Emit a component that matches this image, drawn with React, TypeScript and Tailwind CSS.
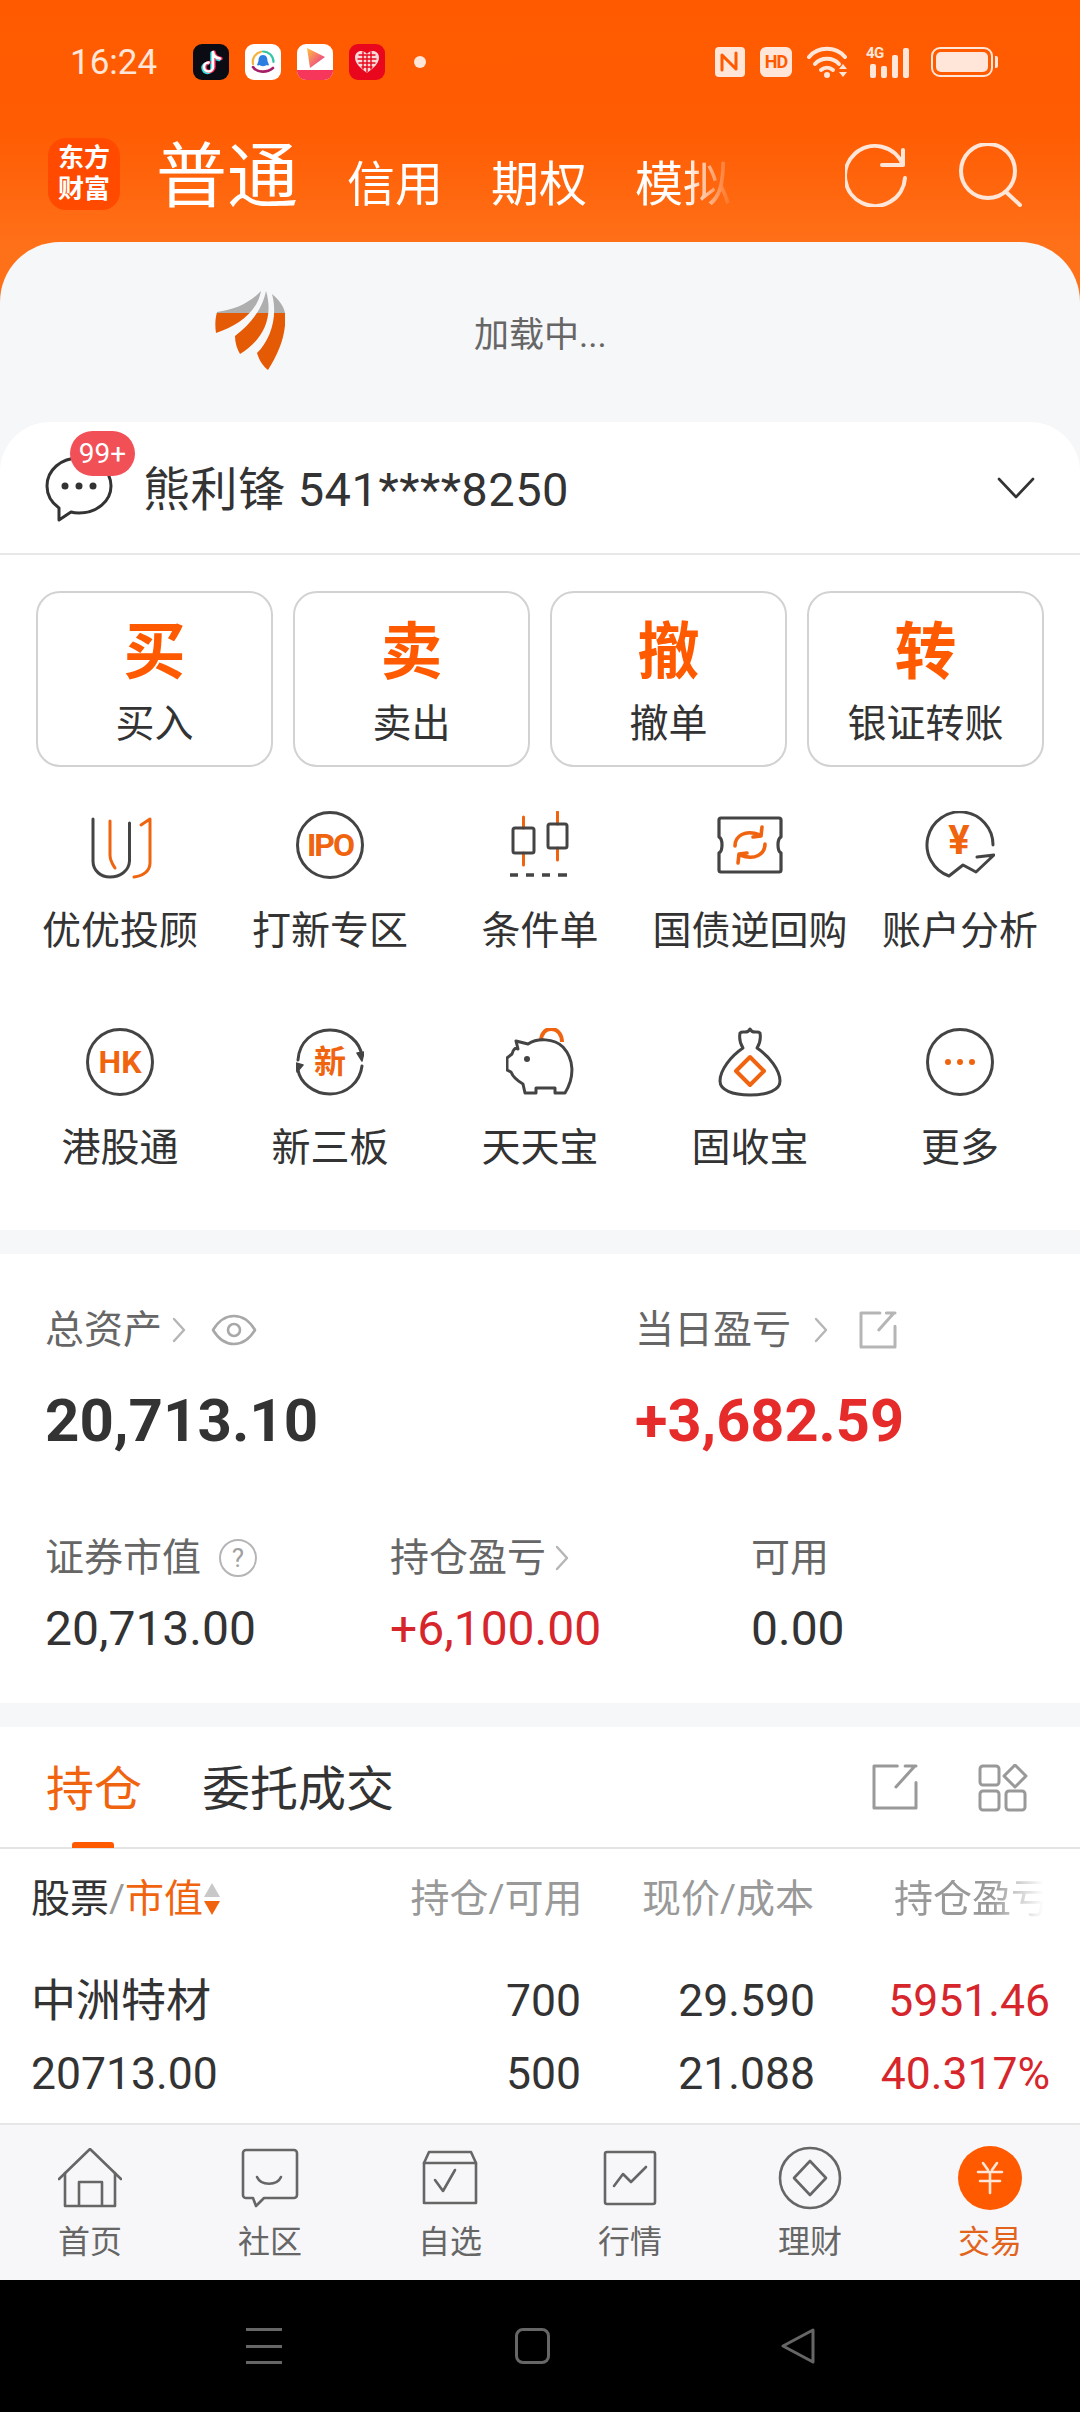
import React from 'react';

const ACCENT = '#ff5a00';
const INK = '#444444';
const PALE = '#ffe6d8';

const Svg = ({ w, h, children, className = '' }: { w: number; h: number; children: React.ReactNode; className?: string }) => (
  <svg width={w} height={h} viewBox={`0 0 ${w} ${h}`} fill="none" strokeLinecap="round" strokeLinejoin="round" className={`shrink-0 ${className}`}>
    {children}
  </svg>
);

/* status bar ---------------------------------------------------------- */

const AppIcons = () => (
  <div className="flex items-center gap-[16px] ml-[36px]">
    <div className="w-[36px] h-[36px] rounded-[9px] bg-[#0b0b14] flex items-center justify-center">
      <Svg w={24} h={26}>
        <path d="M14 3v15a4.5 4.5 0 1 1-4.5-4.5M14 3c.5 4 3 6 7 6.5" stroke="#35dfe6" strokeWidth="3.4" transform="translate(-1 1)" />
        <path d="M14 3v15a4.5 4.5 0 1 1-4.5-4.5M14 3c.5 4 3 6 7 6.5" stroke="#fb2c5a" strokeWidth="3.4" transform="translate(1 0)" />
        <path d="M14 3v15a4.5 4.5 0 1 1-4.5-4.5M14 3c.5 4 3 6 7 6.5" stroke="#ffffff" strokeWidth="2.6" />
      </Svg>
    </div>
    <div className="w-[36px] h-[36px] rounded-[9px] bg-white flex items-center justify-center">
      <Svg w={30} h={30}>
        <path d="M5 17A10.5 10.5 0 0 1 13 4.7" stroke="#f3b33d" strokeWidth="2.2" />
        <path d="M15 4.500A10.500 10.500 0 0 1 25.500 15" stroke="#37c6a6" strokeWidth="2.2" />
        <path d="M5 20c4 6 14 6 20 1" stroke="#a51f66" strokeWidth="2.6" />
        <path d="M15 8c3.500 0 4.500 3 4.500 6l1.500 4c-1 1-2 0-2.500 0-1 1.500-6 1.500-7 0-.5 0-1.500 1-2.500 0l1.500-4c0-3 1-6 4.500-6z" fill="#2c7fe0" />
      </Svg>
    </div>
    <div className="w-[36px] h-[36px] rounded-[9px] bg-white overflow-hidden flex flex-col items-center">
      <Svg w={36} h={26}>
        <defs>
          <linearGradient id="playFill" x1="0" y1="0" x2="1" y2="1">
            <stop offset="0" stopColor="#ffc23c" />
            <stop offset="1" stopColor="#e8239a" />
          </linearGradient>
        </defs>
        <path d="M10 4l18 9-15 11z" fill="url(#playFill)" />
      </Svg>
      <div className="w-full h-[10px] bg-[#f6365a]" />
    </div>
    <div className="w-[36px] h-[36px] rounded-[9px] bg-[#e8071c] flex items-center justify-center">
      <Svg w={26} h={24}>
        <path d="M13 23C6 18 1 13 1 7.500 1 3.500 4 1 7 1c2.500 0 4.500 1 6 3 1.500-2 3.500-3 6-3 3 0 6 2.500 6 6.500 0 5.500-5 10.500-12 15.500z" fill="#fbd9d9" />
        <path d="M5 5h16M4 9h18M5 13h16M8 17h10M9 2v17M13 5v17M17 2v17" stroke="#e8071c" strokeWidth="1.400" />
      </Svg>
    </div>
    <div className="w-[12px] h-[12px] rounded-full bg-[#ffe6d8] ml-[13px]" />
  </div>
);

const StatusRight = () => (
  <div className="flex items-center gap-[15px]">
    <div className="w-[30px] h-[30px] rounded-[4px] bg-[#ffe6d8] flex items-center justify-center">
      <Svg w={22} h={24}>
        <path d="M3 5v15M3 5l14 14M17 3v16" stroke={ACCENT} strokeWidth="3" />
      </Svg>
    </div>
    <div className="w-[32px] h-[30px] rounded-[6px] bg-[#ffe6d8] flex items-center justify-center text-[18px] leading-none font-bold text-[#ff5a00] tracking-[-1px]">HD</div>
    <Svg w={44} h={34}>
      <path d="M2 12C11 1 29 1 38 12" stroke={PALE} strokeWidth="4" />
      <path d="M8 19c6-7 18-7 24 0" stroke={PALE} strokeWidth="4" />
      <path d="M14 25c3.500-3 8.500-3 12 0" stroke={PALE} strokeWidth="4" />
      <circle cx="20" cy="30" r="3" fill={PALE} />
      <path d="M32 24l4-5 4 5zM32 27l4 5 4-5z" fill={PALE} />
    </Svg>
    <div className="relative w-[48px] h-[32px] flex items-end gap-[5px] pl-[4px]">
      <span className="absolute left-0 top-0 text-[15px] leading-none font-bold text-[#ffe6d8] tracking-[-0.5px]">4G</span>
      <div className="w-[6px] h-[14px] rounded-[2px] bg-[#ffe6d8]" />
      <div className="w-[6px] h-[12px] rounded-[2px] bg-[#ffe6d8]" />
      <div className="w-[6px] h-[23px] rounded-[2px] bg-[#ffe6d8]" />
      <div className="w-[6px] h-[30px] rounded-[2px] bg-[#ffe6d8]" />
    </div>
    <div className="flex items-center gap-[2px] ml-[2px]">
      <div className="w-[62px] h-[30px] rounded-[9px] border-[2px] border-[#ffe6d8] p-[3px]">
        <div className="w-full h-full rounded-[5px] bg-[#ffe6d8]" />
      </div>
      <div className="w-[3px] h-[12px] rounded-r-[2px] bg-[#ffe6d8]" />
    </div>
  </div>
);

/* loading placeholder logo ------------------------------------------- */

const WingLogo = () => (
  <Svg w={70} h={80}>
    <defs>
      <linearGradient id="wingFill" gradientUnits="userSpaceOnUse" x1="0" y1="0" x2="0" y2="80">
        <stop offset="0.27" stopColor="#aeaeae" />
        <stop offset="0.27" stopColor="#e55a05" />
      </linearGradient>
    </defs>
    <path d="M46 0C36 11 20 19 2 21 0 28 0 36 1 42 22 35 42 22 46 0z" fill="url(#wingFill)" />
    <path d="M51 0C47 20 34 34 20 45 20 52 22 58 25 63 44 52 60 30 51 0z" fill="url(#wingFill)" />
    <path d="M57 3C63 25 56 48 42 62 44 69 48 75 53 79 64 62 72 42 70 22 69 15 63 8 57 3z" fill="url(#wingFill)" />
  </Svg>
);

/* shortcut grid ------------------------------------------------------- */

const ORANGE = '#f0640f';

const Ring = ({ children }: { children?: React.ReactNode }) => (
  <div className="w-[68px] h-[68px] rounded-full border-[3px] border-[#444444] flex items-center justify-center">{children}</div>
);

const shortcuts: { label: string; icon: React.ReactNode }[] = [
  {
    label: '优优投顾',
    icon: (
      <Svg w={68} h={68}>
        <path d="M7 8v42c0 10 8 16 17 16 10 0 19-6 19.500-16V12" stroke={INK} strokeWidth="3" />
        <path d="M24 10v34c0 6 3 10 5 13" stroke={ORANGE} strokeWidth="3" />
        <path d="M55 14l9-6v44c0 8-7 13-16 14" stroke={ORANGE} strokeWidth="3" />
      </Svg>
    ),
  },
  {
    label: '打新专区',
    icon: <Ring><span className="text-[32px] leading-none font-bold text-[#f0640f] tracking-[-2px]">IPO</span></Ring>,
  },
  {
    label: '条件单',
    icon: (
      <Svg w={68} h={68}>
        <path d="M17.500 6v11M17.500 42v12M51.500 1v12M51.500 37v12" stroke={ORANGE} strokeWidth="3" />
        <rect x="7" y="17" width="21" height="25" rx="2" stroke={INK} strokeWidth="3" />
        <rect x="42" y="13" width="19" height="24" rx="2" stroke={INK} strokeWidth="3" />
        <path d="M4 64h8M20 64h8M36 64h8M52 64h9" stroke={INK} strokeWidth="3.500" strokeLinecap="butt" />
      </Svg>
    ),
  },
  {
    label: '国债逆回购',
    icon: (
      <Svg w={68} h={68}>
        <path d="M5 7h58a2 2 0 0 1 2 2v17c-4 2-4 14 0 16v17a2 2 0 0 1-2 2H5a2 2 0 0 1-2-2V42c4-2 4-14 0-16V9a2 2 0 0 1 2-2z" stroke={INK} strokeWidth="3.200" />
        <path d="M19 35c0-10 10-17 25-11M49 33c0 10-10 17-25 11" stroke={ORANGE} strokeWidth="3.600" />
        <path d="M46 16l-1 9-8 1M22 52l1-9 8-1" stroke={ORANGE} strokeWidth="3.600" />
      </Svg>
    ),
  },
  {
    label: '账户分析',
    icon: (
      <div className="relative w-[70px] h-[68px] flex items-center justify-center">
        <Svg w={70} h={68} className="absolute left-0 top-0">
          <path d="M68 34A33 33 0 1 0 24 65L38 54l13 7 18-17-17 2" stroke={INK} strokeWidth="3" />
        </Svg>
        <span className="text-[40px] leading-none font-bold text-[#f0640f] mb-[8px] mr-[2px]">¥</span>
      </div>
    ),
  },
  {
    label: '港股通',
    icon: <Ring><span className="text-[32px] leading-none font-bold text-[#f0640f]">HK</span></Ring>,
  },
  {
    label: '新三板',
    icon: (
      <div className="relative w-[68px] h-[68px] flex items-center justify-center">
        <Svg w={68} h={68} className="absolute left-0 top-0">
          <path d="M2 32C3 14 17 2 34 2c17 0 30 12 32 26" stroke={INK} strokeWidth="3" />
          <path d="M66 38C64 54 51 66 34 66 17 66 4 54 2 42" stroke={INK} strokeWidth="3" />
          <path d="M61 25l5 8 2-9zM1 44l-1-9 7 2z" fill={INK} stroke={INK} strokeWidth="1.500" />
        </Svg>
        <span className="text-[32px] leading-none font-bold text-[#f0640f]">新</span>
      </div>
    ),
  },
  {
    label: '天天宝',
    icon: (
      <Svg w={68} h={68}>
        <path d="M35 13c0-8 5-12 10-12 7 0 11 6 11 13" stroke={ORANGE} strokeWidth="4" strokeLinecap="butt" />
        <path d="M10 13l12 3c9-6 26-6 35 3 11 12 12 30 2 46H49v-5H30v5H19l-2-9C10 52 7 49 5 44l-4-2V30l5-4c1-4 3-7 6-5z" stroke={INK} strokeWidth="3" />
        <circle cx="21" cy="31" r="3" fill={INK} />
      </Svg>
    ),
  },
  {
    label: '固收宝',
    icon: (
      <Svg w={68} h={70}>
        <path d="M24 6c3-3 7 2 10-4 3 6 7 1 10 4 1 6-1 12-3 15 12 8 23 22 23 33 0 9-12 14-30 14S4 63 4 54c0-11 11-25 23-33-2-3-4-9-3-15z" stroke={INK} strokeWidth="3" />
        <path d="M34 30l14 14-14 14-14-14z" stroke={ORANGE} strokeWidth="4" />
      </Svg>
    ),
  },
  {
    label: '更多',
    icon: (
      <Ring>
        <div className="flex gap-[6px]">
          <div className="w-[6px] h-[6px] rounded-full bg-[#f0640f]" />
          <div className="w-[6px] h-[6px] rounded-full bg-[#f0640f]" />
          <div className="w-[6px] h-[6px] rounded-full bg-[#f0640f]" />
        </div>
      </Ring>
    ),
  },
];

/* bottom navigation --------------------------------------------------- */

const NAV = '#666666';

const tabs: { label: string; icon: React.ReactNode }[] = [
  {
    label: '首页',
    icon: (
      <Svg w={64} h={60}>
        <path d="M1 31L32 1l31 30" stroke={NAV} strokeWidth="2.600" />
        <path d="M7 25v33h50V25M21 58V34h23v24" stroke={NAV} strokeWidth="2.600" />
      </Svg>
    ),
  },
  {
    label: '社区',
    icon: (
      <Svg w={58} h={60}>
        <path d="M5 2h48a3 3 0 0 1 3 3v42a3 3 0 0 1-3 3H23l-8 8-3-8H5a3 3 0 0 1-3-3V5a3 3 0 0 1 3-3z" stroke={NAV} strokeWidth="2.600" />
        <path d="M16 29c4 9 20 9 24 0" stroke={NAV} strokeWidth="2.600" />
      </Svg>
    ),
  },
  {
    label: '自选',
    icon: (
      <Svg w={56} h={56}>
        <path d="M2 13L7 2h42l5 11v40H2z" stroke={NAV} strokeWidth="2.600" />
        <path d="M2 13h52M13 30l8 11 12-21" stroke={NAV} strokeWidth="2.600" />
      </Svg>
    ),
  },
  {
    label: '行情',
    icon: (
      <Svg w={54} h={56}>
        <rect x="2" y="2" width="50" height="52" rx="2" stroke={NAV} strokeWidth="2.600" />
        <path d="M11 36l9-12 8 8 15-15" stroke={NAV} strokeWidth="2.600" />
      </Svg>
    ),
  },
  {
    label: '理财',
    icon: (
      <Svg w={64} h={64}>
        <circle cx="32" cy="32" r="30" stroke={NAV} strokeWidth="2.600" />
        <path d="M32 15l16 17-16 17-16-17z" stroke={NAV} strokeWidth="2.600" />
      </Svg>
    ),
  },
  {
    label: '交易',
    icon: (
      <div className="w-[64px] h-[64px] rounded-full bg-[#ff5a00] flex items-center justify-center">
        <Svg w={34} h={34}>
          <path d="M10 2l5 7M24 2l-5 7M5 11h24M7 20h20M17 11v21" stroke="#ffe6d8" strokeWidth="2.600" />
        </Svg>
      </div>
    ),
  },
];

const Caret = ({ className = '' }: { className?: string }) => (
  <Svg w={16} h={26} className={className}>
    <path d="M3 2l10 11L3 24" stroke="#b5b5b5" strokeWidth="2.400" />
  </Svg>
);

const Popout = ({ size, color }: { size: number; color: string }) => (
  <Svg w={size} h={size}>
    <path
      d={`M${size * 0.55} 2H2V${size - 2}H${size - 2}V${size * 0.4}M${size - 4} 3L${size * 0.52} ${size * 0.5}M${size * 0.72} 2H${size - 2}`}
      stroke={color}
      strokeWidth="3"
    />
  </Svg>
);

export default function App() {
  return (
    <div className="w-[1080px] h-[2412px] flex flex-col overflow-hidden bg-white text-[#333333] [font-family:Roboto,'Noto_Sans_CJK_SC',sans-serif]">
      <div className="flex-1 min-h-0 overflow-hidden bg-[linear-gradient(180deg,#ff5a00_0px,#ff5c03_130px,#ff7119_250px)]">
        {/* status bar */}
        <div className="h-[124px] flex items-center justify-between pl-[70px] pr-[82px]">
          <div className="flex items-center">
            <span className="text-[35px] leading-none text-[#ffe6d8]">16:24</span>
            <AppIcons />
          </div>
          <StatusRight />
        </div>

        {/* account type tabs */}
        <div className="h-[118px] flex items-start pl-[48px]">
          <div className="w-[72px] h-[72px] mt-[14px] rounded-[18px] bg-[#ff4a00] flex flex-col items-center justify-center text-white font-bold text-[26px] leading-[31px]">
            <span>东方</span>
            <span>财富</span>
          </div>
          <div className="w-[602px] ml-[36px] mt-[13px] flex items-baseline gap-[48px] text-white text-[48px] leading-[80px] [mask-image:linear-gradient(to_right,black_88%,transparent_96%)]">
            <span className="text-[71px] mr-[1px]">普通</span>
            <span>信用</span>
            <span>期权</span>
            <span>模拟</span>
          </div>
          <div className="ml-[87px] mt-[19px] flex items-start gap-[49px]">
            <Svg w={64} h={64}>
              <path d="M58 7v15H37M58 22A30 30 0 1 0 60 35" stroke={PALE} strokeWidth="4" />
            </Svg>
            <Svg w={66} h={64}>
              <circle cx="30" cy="28" r="27" stroke={PALE} strokeWidth="4" />
              <path d="M48 49l14 13" stroke={PALE} strokeWidth="4" />
            </Svg>
          </div>
        </div>

        {/* card body */}
        <div className="bg-[#f6f7f9] rounded-t-[60px] h-full">
          <div className="h-[180px] flex items-start pl-[215px]">
            <div className="mt-[49px]"><WingLogo /></div>
            <span className="ml-[189px] mt-[70px] text-[35px] leading-[48px] text-[#666666]">加载中...</span>
          </div>

          <div className="rounded-t-[50px] bg-white h-full">
            {/* account row */}
            <div className="relative h-[133px] flex items-center border-b-[2px] border-[#e8e8e8] pl-[45px] pr-[45px]">
              <Svg w={68} h={68} className="mt-[4px]">
                <path d="M34 2C16 2 2 14 2 30c0 9 5 17 12 22v12l12-8c3 1 5 1 8 1 18 0 32-12 32-27S52 2 34 2z" stroke="#333333" strokeWidth="3" />
                <circle cx="20" cy="30" r="3.500" fill="#333333" />
                <circle cx="34" cy="30" r="3.500" fill="#333333" />
                <circle cx="48" cy="30" r="3.500" fill="#333333" />
              </Svg>
              <div className="absolute left-[70px] top-[9px] w-[65px] h-[45px] rounded-full bg-[#f25057] flex items-center justify-center text-white text-[28px] leading-none">99+</div>
              <span className="ml-[30px] mt-[3px] text-[47px] leading-none text-[#333333] tracking-[0.5px]">熊利锋 541****8250</span>
              <Svg w={38} h={24} className="ml-auto">
                <path d="M2 3l17 18L36 3" stroke="#333333" strokeWidth="2.600" />
              </Svg>
            </div>

            {/* order buttons */}
            <div className="px-[36px] pt-[36px] grid grid-cols-4 gap-[20px]">
              {[
                ['买', '买入'],
                ['卖', '卖出'],
                ['撤', '撤单'],
                ['转', '银证转账'],
              ].map(([big, label]) => (
                <div key={big} className="h-[176px] rounded-[24px] border-[2px] border-[#d2d2d2] flex flex-col items-center">
                  <span className="mt-[28px] text-[62px] leading-[64px] font-bold text-[#ff5a00]">{big}</span>
                  <span className="mt-[16px] text-[39px] leading-[46px] text-[#333333]">{label}</span>
                </div>
              ))}
            </div>

            {/* shortcut grid */}
            <div className="px-[15px] pt-[44px] grid grid-cols-5 gap-y-[74px]">
              {shortcuts.map((item) => (
                <div key={item.label} className="flex flex-col items-center">
                  <div className="h-[68px] flex items-center justify-center">{item.icon}</div>
                  <span className="mt-[29px] text-[39px] leading-[46px] text-[#333333] whitespace-nowrap">{item.label}</span>
                </div>
              ))}
            </div>

            {/* assets */}
            <div className="mt-[59px] border-y-[24px] border-[#f6f7f9] h-[497px] pl-[45px] pr-[46px]">
              <div className="flex pt-[53px]">
                <div className="w-[590px]">
                  <div className="flex items-center h-[46px]">
                    <span className="text-[39px] leading-[46px] text-[#666666]">总资产</span>
                    <Caret className="ml-[9px]" />
                    <Svg w={46} h={32} className="ml-[24px]">
                      <path d="M2 16C8 6 15 2 23 2s15 4 21 14c-6 10-13 14-21 14S8 26 2 16z" stroke="#a8a8a8" strokeWidth="2.600" />
                      <circle cx="23" cy="16" r="6" stroke="#a8a8a8" strokeWidth="2.600" />
                    </Svg>
                  </div>
                  <div className="mt-[33px] text-[60px] leading-[70px] font-bold text-[#333333]">20,713.10</div>
                </div>
                <div>
                  <div className="flex items-center h-[46px]">
                    <span className="text-[39px] leading-[46px] text-[#666666]">当日盈亏</span>
                    <Caret className="ml-[22px]" />
                    <div className="ml-[30px]"><Popout size={38} color="#b5b5b5" /></div>
                  </div>
                  <div className="mt-[33px] text-[59.500px] leading-[70px] font-bold text-[#e62b2b]">+3,682.59</div>
                </div>
              </div>

              <div className="flex mt-[79px]">
                <div className="w-[345px]">
                  <div className="flex items-center h-[46px]">
                    <span className="text-[39px] leading-[46px] text-[#666666]">证券市值</span>
                    <div className="ml-[18px] w-[38px] h-[38px] rounded-full border-[2.500px] border-[#b5b5b5] flex items-center justify-center text-[26px] leading-none text-[#a0a0a0]">?</div>
                  </div>
                  <div className="mt-[20px] text-[48px] leading-[56px] text-[#333333]">20,713.00</div>
                </div>
                <div className="w-[361px]">
                  <div className="flex items-center h-[46px]">
                    <span className="text-[39px] leading-[46px] text-[#666666]">持仓盈亏</span>
                    <Caret className="ml-[8px]" />
                  </div>
                  <div className="mt-[20px] text-[48px] leading-[56px] text-[#d6262c]">+6,100.00</div>
                </div>
                <div>
                  <div className="h-[46px] text-[39px] leading-[46px] text-[#666666]">可用</div>
                  <div className="mt-[20px] text-[48px] leading-[56px] text-[#333333]">0.00</div>
                </div>
              </div>
            </div>

            {/* positions */}
            <div className="h-[122px] border-b-[2px] border-[#e4e4e4] flex items-start pl-[46px] pr-[52px]">
              <div className="relative mt-[33px]">
                <span className="text-[48px] leading-[60px] text-[#f0640f]">持仓</span>
                <div className="absolute left-[26px] top-[82px] w-[42px] h-[6px] rounded-t-[3px] bg-[#ff5a00]" />
              </div>
              <span className="ml-[60px] mt-[33px] text-[48px] leading-[60px] text-[#333333]">委托成交</span>
              <div className="ml-auto mt-[37px] flex items-start gap-[60px]">
                <Popout size={46} color="#999999" />
                <Svg w={50} h={48}>
                  <rect x="2" y="2" width="19" height="19" rx="3" stroke="#999999" strokeWidth="3" />
                  <path d="M37 1l11 11-11 11-11-11z" stroke="#999999" strokeWidth="3" />
                  <rect x="2" y="27" width="19" height="19" rx="3" stroke="#999999" strokeWidth="3" />
                  <rect x="28" y="27" width="19" height="19" rx="3" stroke="#999999" strokeWidth="3" />
                </Svg>
              </div>
            </div>

            <div className="pl-[31px] pr-[30px]">
              <div className="h-[100px] flex items-center text-[39px] leading-none text-[#999999]">
                <div className="w-[380px] flex items-center text-[#333333]">
                  <span>股票</span>
                  <span className="text-[#999999]">/</span>
                  <span className="text-[#f0640f]">市值</span>
                  <Svg w={18} h={36}>
                    <path d="M9 2l8 14H1z" fill="#c8c8c8" />
                    <path d="M9 34l8-14H1z" fill="#f0640f" />
                  </Svg>
                </div>
                <span className="w-[170px] text-right whitespace-nowrap">持仓/可用</span>
                <span className="w-[234px] text-right whitespace-nowrap">现价/成本</span>
                <span className="ml-[80px] whitespace-nowrap [mask-image:linear-gradient(to_right,black_62%,transparent_96%)]">持仓盈亏</span>
              </div>
              <div className="mt-[17px] h-[70px] flex items-center text-[44.500px] leading-none text-[#333333]">
                <span className="w-[380px] text-[45px]">中洲特材</span>
                <span className="w-[170px] text-right">700</span>
                <span className="w-[234px] text-right">29.590</span>
                <span className="w-[235px] text-right text-[#d6262c]">5951.46</span>
              </div>
              <div className="h-[76px] flex items-center text-[44.500px] leading-none text-[#333333]">
                <span className="w-[380px]">20713.00</span>
                <span className="w-[170px] text-right">500</span>
                <span className="w-[234px] text-right">21.088</span>
                <span className="w-[235px] text-right text-[#d6262c]">40.317%</span>
              </div>
            </div>
          </div>
        </div>
      </div>

      {/* bottom navigation */}
      <div className="h-[157px] shrink-0 border-t-[2px] border-[#e6e6e6] bg-[#f7f7f9] grid grid-cols-6">
        {tabs.map((tab) => (
          <div key={tab.label} className="flex flex-col items-center pt-[21px]">
            <div className="h-[64px] flex items-center justify-center">{tab.icon}</div>
            <span className={`mt-[12px] text-[32px] leading-[40px] ${tab.label === '交易' ? 'text-[#e2641c]' : 'text-[#666666]'}`}>{tab.label}</span>
          </div>
        ))}
      </div>

      {/* system navigation */}
      <div className="h-[132px] shrink-0 bg-black flex items-start pt-[48px] pl-[246px]">
        <div className="w-[36px] h-[36px] flex flex-col justify-between">
          <div className="h-[3px] bg-[#666666]" />
          <div className="h-[3px] bg-[#666666]" />
          <div className="h-[3px] bg-[#666666]" />
        </div>
        <div className="ml-[233px] w-[35px] h-[36px] rounded-[8px] border-[3px] border-[#666666]" />
        <div className="ml-[230px]">
          <Svg w={36} h={36}>
            <path d="M33 2L3 18l30 16z" stroke="#666666" strokeWidth="3" />
          </Svg>
        </div>
      </div>
    </div>
  );
}
